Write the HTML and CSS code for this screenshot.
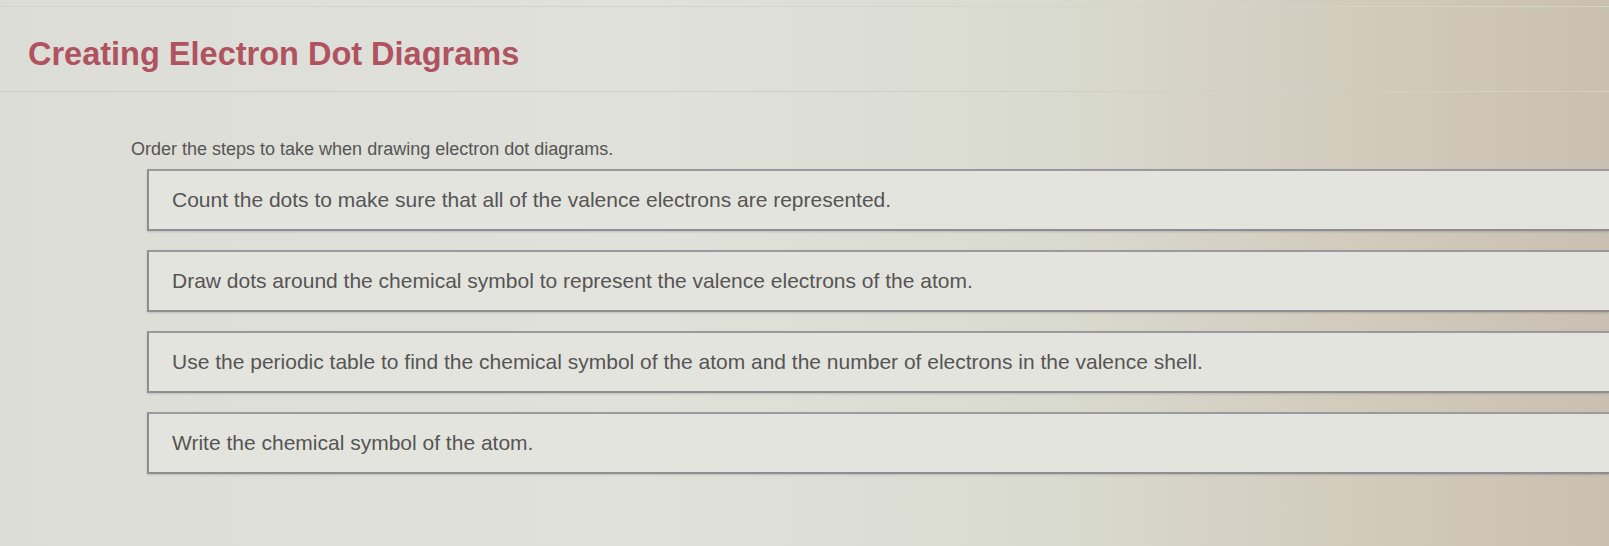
FILE: index.html
```html
<html>
    <head>
        <title>Creating Electron Dot Diagrams</title>
        <meta name="viewport" content="initial-scale=1.0">
        <link rel="stylesheet" href="styles.css">
    </head>
    <body>
        <div class="header">
            <h1 class="title">Creating Electron Dot Diagrams</h1>
        </div>
        <div class="content">
            <p class="prompt">Order the steps to take when drawing electron dot diagrams.</p>
            <div class="steps">
                <div class="step"><span>Count the dots to make sure that all of the valence electrons are represented.</span></div>
                <div class="step"><span>Draw dots around the chemical symbol to represent the valence electrons of the atom.</span></div>
                <div class="step"><span>Use the periodic table to find the chemical symbol of the atom and the number of electrons in the valence shell.</span></div>
                <div class="step"><span>Write the chemical symbol of the atom.</span></div>
            </div>
        </div>
    </body>
</html>
```

FILE: styles.css
```css
body {
    margin: 0;
    height: 546px;
    overflow: hidden;
    font-family: "Liberation Sans", Arial, sans-serif;
    background: linear-gradient(90deg, #dcddd6 0%, #e0e1da 40%, #d9dbd0 65%, #d2cabb 85%, #c9c0b1 100%);
}
.header {
    height: 86px;
    border-top: 1px solid #d4d4cc;
    border-bottom: 1px solid #cfd0c8;
    margin-top: 6px;
    box-sizing: border-box;
}
.title {
    margin: 0;
    padding: 29px 0 0 28px;
    font-size: 32.5px;
    font-weight: bold;
    color: #b0525f;
    line-height: 36px;
}
.content {
    padding-left: 131px;
}
.prompt {
    margin: 47px 0 0 0;
    font-size: 18px;
    color: #555;
    line-height: 20px;
}
.steps {
    margin: 10px 0 0 16px;
    display: flex;
    flex-direction: column;
    gap: 19px;
}
.step {
    height: 58px;
    display: flex;
    align-items: center;
    padding-left: 23px;
    background-color: #e4e4de;
    border: 2px solid #8e8c94;
    border-right: none;
    border-top-color: #9a99a0;
    box-shadow: 0 1px 2px rgba(0,0,0,0.15);
    font-size: 21px;
    color: #555;
}
```
